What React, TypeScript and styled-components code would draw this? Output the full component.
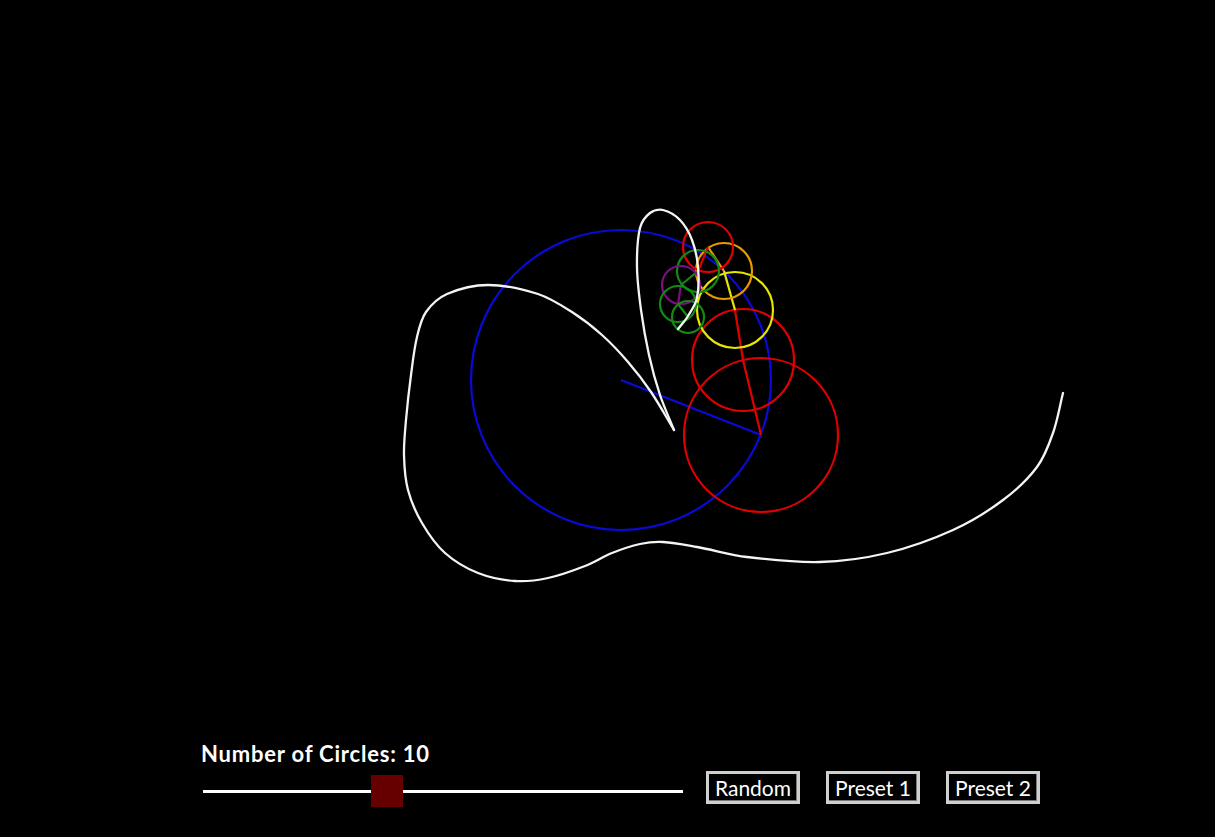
import React from "react";
import styled, { createGlobalStyle } from "styled-components";

type Pt = [number, number];

const GlobalStyle = createGlobalStyle`
  html, body {
    margin: 0;
    padding: 0;
    background: #000;
    overflow: hidden;
  }
`;

// epicycle chain: center, radius, colour
const CIRCLES: { c: Pt; r: number; color: string }[] = [
  { c: [621, 380], r: 150, color: "#0a0ad8" },
  { c: [761, 435], r: 77, color: "#e00000" },
  { c: [743, 360], r: 51, color: "#e00000" },
  { c: [735, 310], r: 38, color: "#e6e600" },
  { c: [724, 271], r: 28, color: "#e89a00" },
  { c: [708, 247], r: 25, color: "#e00000" },
  { c: [698, 271], r: 21, color: "#138a13" },
  { c: [681, 285], r: 19, color: "#7d0e7d" },
  { c: [678, 304], r: 18, color: "#138a13" },
  { c: [688, 317], r: 16, color: "#138a13" },
];

const PEN: Pt = [678, 329];

const TRAIL_A: Pt[] = [
  [1063, 393], [1053, 433], [1037, 467], [1003, 500], [953, 530], [887, 553],
  [820, 562], [747, 557], [697, 547], [663, 542], [640, 544], [612, 553],
  [585, 566], [548, 578], [515, 581], [478, 573], [445, 553], [422, 523],
  [408, 490], [404, 455], [406, 420], [411, 375], [417, 337], [426, 312],
  [447, 294], [488, 285], [538, 294], [572, 312], [602, 335], [628, 362],
  [651, 392], [674, 430],
];

const TRAIL_B: Pt[] = [
  [674, 430], [660, 395], [649, 355], [641, 310], [637, 267], [640, 228],
  [650, 213], [663, 210], [680, 220], [692, 240], [698, 267], [697, 298],
  [688, 316], [678, 329],
];

const dist = (a: Pt, b: Pt) => Math.hypot(b[0] - a[0], b[1] - a[1]);

// smooth curve through points, tangents scaled to the uneven spacing
function smoothPath(pts: Pt[]) {
  const tangent = (i: number): Pt => {
    const prev = pts[i - 1] || pts[i];
    const next = pts[i + 1] || pts[i];
    const len = dist(prev, pts[i]) + dist(pts[i], next) || 1;
    return [(next[0] - prev[0]) / len, (next[1] - prev[1]) / len];
  };
  let d = `M${pts[0][0]},${pts[0][1]}`;
  for (let i = 0; i < pts.length - 1; i++) {
    const p1 = pts[i];
    const p2 = pts[i + 1];
    const seg = dist(p1, p2) / 3;
    const t1 = tangent(i);
    const t2 = tangent(i + 1);
    const c1 = [p1[0] + t1[0] * seg, p1[1] + t1[1] * seg];
    const c2 = [p2[0] - t2[0] * seg, p2[1] - t2[1] * seg];
    d += ` C${c1[0].toFixed(1)},${c1[1].toFixed(1)} ${c2[0].toFixed(1)},${c2[1].toFixed(1)} ${p2[0]},${p2[1]}`;
  }
  return d;
}

export default function App() {
  const [count, setCount] = React.useState(10);

  return (
    <Page>
      <GlobalStyle />
      <Canvas viewBox="0 0 1215 741">
        {CIRCLES.map((circle, i) => {
          const next = i < CIRCLES.length - 1 ? CIRCLES[i + 1].c : PEN;
          return (
            <g key={i} stroke={circle.color} strokeWidth={2.2} fill="none">
              <circle cx={circle.c[0]} cy={circle.c[1]} r={circle.r} />
              <line x1={circle.c[0]} y1={circle.c[1]} x2={next[0]} y2={next[1]} />
            </g>
          );
        })}
        <g stroke="#f4f4f4" strokeWidth={2.3} fill="none" strokeLinecap="round">
          <path d={smoothPath(TRAIL_A)} />
          <path d={smoothPath(TRAIL_B)} />
        </g>
      </Canvas>
      <Controls>
        <Label>Number of Circles: {count}</Label>
        <Row>
          <Slider
            type="range"
            min={1}
            max={25}
            value={count}
            onChange={(e) => setCount(Number(e.target.value))}
          />
          <Buttons>
            <Button>Random</Button>
            <Button>Preset 1</Button>
            <Button>Preset 2</Button>
          </Buttons>
        </Row>
      </Controls>
    </Page>
  );
}

const Page = styled.div`
  width: 100%;
  height: 100vh;
  display: flex;
  flex-direction: column;
  background: #000;
`;

const Canvas = styled.svg`
  display: block;
  width: 1215px;
  height: 741px;
  flex-shrink: 0;
`;

const Controls = styled.div`
  padding-left: 201px;
  color: #fff;
  font-family: Lato, "Open Sans", sans-serif;
`;

const Label = styled.div`
  font-size: 22px;
  font-weight: 700;
  line-height: 25px;
  letter-spacing: 0.8px;
`;

const Row = styled.div`
  display: flex;
  align-items: flex-start;
  margin-top: 5px;
`;

const Slider = styled.input`
  -webkit-appearance: none;
  appearance: none;
  width: 480px;
  height: 32px;
  margin: 4px 2px 0 2px;
  background: transparent;

  &::-webkit-slider-runnable-track {
    height: 3px;
    background: #fff;
  }

  &::-webkit-slider-thumb {
    -webkit-appearance: none;
    width: 32px;
    height: 32px;
    margin-top: -14.5px;
    background: #660000;
    border: none;
    border-radius: 0;
  }
`;

const Buttons = styled.div`
  display: flex;
  gap: 26px;
  margin-left: 21px;
`;

const Button = styled.button`
  height: 33px;
  width: 94px;
  padding: 0;
  background: #000;
  color: #fff;
  border: 3px solid #cfcfcf;
  box-shadow: inset -1px -1px 0 #7a7a7a;
  font-family: Lato, "Open Sans", sans-serif;
  font-size: 21px;
  line-height: 27px;
  cursor: pointer;
`;
